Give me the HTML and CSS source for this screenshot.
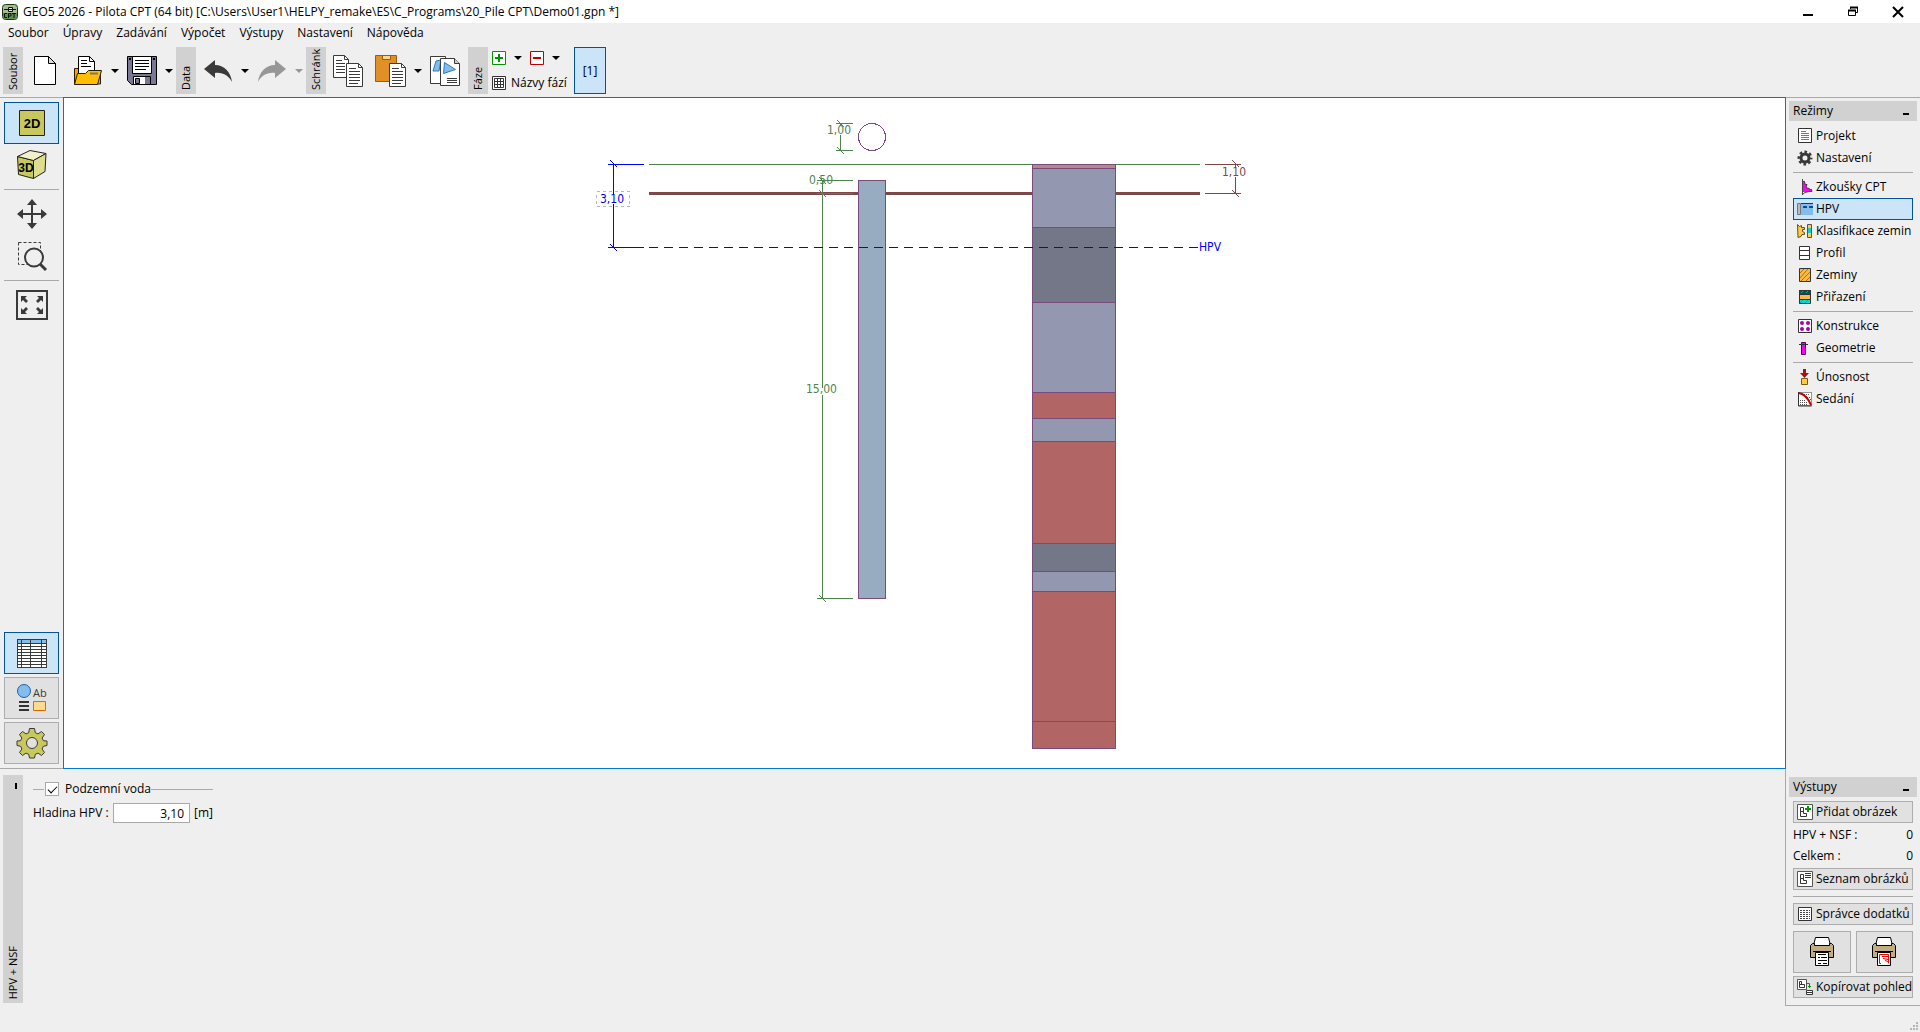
FILE: index.html
```html
<!DOCTYPE html>
<html lang="cs">
<head>
<meta charset="utf-8">
<title>GEO5 2026 - Pilota CPT</title>
<link rel="stylesheet" href="styles.css">
</head>
<body>
<header class="titlebar">
  <svg class="app-icon" width="16" height="16" viewBox="0 0 16 16"><rect x=".5" y=".5" width="15" height="15" rx="3" fill="#a3bd8c" stroke="#23331c"/><path d="M1 9h14v4a2 2 0 0 1-2 2H3a2 2 0 0 1-2-2z" fill="#5f8f4c"/><path d="M2 5.500h12M6.500 3.500h4v4h-4z" fill="#e4ecd6" stroke="#111"/><path d="M5 9.500H2.500v4H5M6.500 14V9.500h2.500v2.500H6.500M10 9.500h4M12 9.500V14" fill="none" stroke="#0a120a"/></svg>
  <h1 class="title">GEO5 2026 - Pilota CPT (64 bit) [C:\Users\User1\HELPY_remake\ES\C_Programs\20_Pile CPT\Demo01.gpn *]</h1>
  <div class="window-controls">
    <button aria-label="Minimalizovat"><svg width="12" height="12"><path d="M1 9h10" stroke="#000" stroke-width="2"/></svg></button>
    <button aria-label="Obnovit"><svg width="12" height="12" fill="none" stroke="#000"><path d="M3.500 3V1.500h7v5H9"/><path d="M3 1.500h8M1 4.500h8" stroke-width="2"/><path d="M1.500 4.500h7v5h-7z"/></svg></button>
    <button aria-label="Zavřít"><svg width="12" height="12"><path d="M1 1l10 10M11 1L1 11" stroke="#000" stroke-width="2"/></svg></button>
  </div>
</header>

<nav class="menubar">
  <button>Soubor</button><button>Úpravy</button><button>Zadávání</button><button>Výpočet</button><button>Výstupy</button><button>Nastavení</button><button>Nápověda</button>
</nav>

<div class="toolbar">
  <section class="group">
    <h2 class="vlabel">Soubor</h2>
    <div class="tools">
      <button class="tool" aria-label="Nový"><svg width="32" height="32"><path d="M5.500 1.500h14l7 7v21h-21z" fill="#fff" stroke="#000"/><path d="M19.500 1.500v7h7z" fill="#ddd" stroke="#000"/></svg></button>
      <button class="tool" aria-label="Otevřít"><svg width="32" height="32"><path d="M2.500 29V13.500h6l2 3h18V29z" fill="#f5a400" stroke="#2a2000"/><path d="M6.500 24V1.500h11l5 5V24z" fill="#fff" stroke="#000"/><path d="M17.500 1.500v5h5M9 8.500h6M9 5.500h6M9 11.500h10" fill="none" stroke="#000"/><path d="M2.500 29.500l3-11h8l3-3h13l-4 14z" fill="#ffbf00" stroke="#2a2000"/><path d="M18 18.500h8" stroke="#777" stroke-width="2"/></svg></button>
      <button class="drop" aria-label="Naposledy otevřené"><span class="arrow"></span></button>
      <button class="tool" aria-label="Uložit"><svg width="32" height="32"><path d="M1.500 1.500h29v28h-25l-4-4z" fill="#7b7896" stroke="#000"/><path d="M6.500 1.500h19v17h-19z" fill="#fff" stroke="#000"/><path d="M9 5.500h14M9 8.500h14M9 11.500h14M9 14.500h11" stroke="#000"/><path d="M7.500 21.500h17v8h-17z" fill="#fff" stroke="#000"/><path d="M19 22h5v7h-5z" fill="#7b7896"/><path d="M9.500 23.500h4v5h-4z" fill="#7b7896" stroke="#000"/><path d="M3 3h2v2H3zM27 3h2v2h-2z"/></svg></button>
      <button class="drop" aria-label="Uložit jako"><span class="arrow"></span></button>
    </div>
  </section>
  <section class="group">
    <h2 class="vlabel">Data</h2>
    <div class="tools">
      <button class="tool" aria-label="Zpět"><svg width="32" height="32"><path d="M2 14L13 5v5c9 0 16 7 17 17-3-6-9-10-17-9v5z" fill="#3a3a3a"/></svg></button>
      <button class="drop" aria-label="Historie zpět"><span class="arrow"></span></button>
      <button class="tool" aria-label="Znovu" disabled><svg width="32" height="32"><path d="M30 14L19 5v5C10 10 3 17 2 27c3-6 9-10 17-9v5z" fill="#979797"/></svg></button>
      <button class="drop" aria-label="Historie znovu" disabled><span class="arrow"></span></button>
    </div>
  </section>
  <section class="group">
    <h2 class="vlabel">Schránk</h2>
    <div class="tools">
      <button class="tool" aria-label="Kopírovat"><svg width="32" height="32" fill="#fff" stroke="#3a3a3a"><path d="M1.500.500h11l4 4v18h-15z"/><path d="M12.500.500v4h4M4 5.500h6M4 8.500h9M4 11.500h9M4 14.500h9M4 17.500h9" fill="none"/><path d="M14.500 8.500h12l4 4v19h-16z"/><path d="M26.500 8.500v4h4M17 13.500h7M17 16.500h11M17 19.500h11M17 22.500h11M17 25.500h11M17 28.500h9" fill="none"/></svg></button>
      <button class="tool" aria-label="Vložit"><svg width="32" height="32" fill="#fff" stroke="#3a3a3a"><path d="M.500.500h21v26H.500z" fill="#e28f26" stroke="#9b5c0b"/><path d="M7.500.500h8v4h-8z" fill="#f8d78c" stroke="#9b5c0b"/><path d="M14.500 8.500h12l4 4v19h-16z"/><path d="M26.500 8.500v4h4M17 13.500h7M17 16.500h11M17 19.500h11M17 22.500h11M17 25.500h11M17 28.500h9" fill="none"/></svg></button>
      <button class="drop" aria-label="Možnosti vložení"><span class="arrow"></span></button>
      <button class="tool" aria-label="Kopírovat obrázky"><svg width="32" height="32" fill="#fff" stroke="#3a3a3a"><path d="M1.500 1.500h15v27h-15z"/><path d="M4 16l3-10 5-1-2 11z" fill="#83bdeb" stroke="#2c7cbf"/><path d="M11.500 3.500h14l5 5v22h-19z"/><path d="M25.500 3.500v5h5" fill="#ccc"/><path d="M15.500 7.500l11 7-12 4z" fill="#83bdeb" stroke="#2c7cbf"/><path d="M18 23.500h10M18 25.500h10M18 27.500h10"/></svg></button>
    </div>
  </section>
  <section class="group">
    <h2 class="vlabel">Fáze</h2>
    <div class="phases">
      <div class="phase-row">
        <button class="mini" aria-label="Přidat fázi"><svg width="14" height="14"><path d="M.500.500h13v13H.500z" fill="#fff" stroke="#009600"/><path d="M7 3v8M3 7h8" stroke="#009600" stroke-width="2"/></svg></button>
        <button class="drop wide" aria-label="Možnosti přidání"><span class="arrow"></span></button>
        <button class="mini" aria-label="Odebrat fázi"><svg width="14" height="14"><path d="M.500.500h13v13H.500z" fill="#fff" stroke="#c00000"/><path d="M3 7h8" stroke="#c00000" stroke-width="2"/></svg></button>
        <button class="drop wide" aria-label="Možnosti odebrání"><span class="arrow"></span></button>
      </div>
      <button class="phase-names"><svg width="14" height="14" fill="#fff" stroke="#333"><path d="M.500.500h13v13H.500z"/><path d="M2.500 2.500h9v9h-9zM2.500 5.500h9M2.500 8.500h9M5.500 2.500v9M8.500 2.500v9"/></svg>Názvy fází</button>
    </div>
  </section>
  <button class="phase-tab">[1]</button>
</div>

<div class="workspace">
  <div class="left">
    <div class="upper">
      <aside class="sidebar">
        <button class="side on" aria-label="Pohled 2D"><svg width="32" height="32"><path d="M3.500 3.500h25v25h-25z" fill="#c9c85c" stroke="#222"/><text x="16" y="21" class="badge">2D</text></svg></button>
        <button class="side" aria-label="Pohled 3D"><svg width="32" height="32" stroke="#222"><path d="M1.500 7.500l16 4v18l-15-4z" fill="#c9c85c"/><path d="M1.500 7.500L14 1.500l16 3-12.500 7z" fill="#f1f0cb"/><path d="M17.500 11.500L30 4.500l-1 18-11.500 7z" fill="#dddc8f"/><text x="10" y="23" class="badge small">3D</text></svg></button>
        <hr>
        <button class="side" aria-label="Posun"><svg width="32" height="32"><path d="M16 5v22M5 16h22" stroke="#3a3a3a" stroke-width="2"/><path d="M16 1l5 6H11zM16 31l5-6H11zM1 16l6-5v10zM31 16l-6-5v10z" fill="#3a3a3a"/></svg></button>
        <button class="side" aria-label="Zvětšení výběru"><svg width="32" height="32" fill="none" stroke="#3a3a3a"><path d="M2.500 2.500h22v22h-22z" stroke-dasharray="3 2"/><circle cx="18" cy="17.500" r="9" fill="#efefef" stroke-width="2"/><path d="M24 24l6 6" stroke-width="3"/></svg></button>
        <hr>
        <button class="side" aria-label="Zobrazit vše"><svg width="32" height="32" fill="#3a3a3a"><path d="M1 2h30v28H1z" fill="none" stroke="#3a3a3a" stroke-width="2"/><path d="M5 7h6l-2 2 3 3-2 2-3-3-2 2zM27 7h-6l2 2-3 3 2 2 3-3 2 2zM5 25h6l-2-2 3-3-2-2-3 3-2-2zM27 25h-6l2-2-3-3 2-2 3 3 2-2z"/></svg></button>
        <div class="side-bottom">
          <button class="side on" aria-label="Tabulky"><svg width="32" height="32" shape-rendering="crispEdges"><path d="M1.500 2.500h29v28h-29z" fill="#fff"/><path d="M2 3h28v4H2z" fill="#83bdeb"/><path d="M1.500 2.500h29v28h-29zM1.500 6.500h29M1.500 9.500h29M1.500 12.500h29M1.500 15.500h29M1.500 18.500h29M1.500 21.500h29M1.500 24.500h29M1.500 27.500h29M5.500 2.500v28M14.500 2.500v28M25.500 2.500v28" fill="none" stroke="#3a3a3a"/></svg></button>
          <button class="side framed" aria-label="Nastavení kreslení"><svg width="32" height="32"><circle cx="8" cy="9" r="6.500" fill="#83bdeb" stroke="#1766ad"/><text x="17" y="15" class="ab">Ab</text><path d="M3 20h10M3 24h10M3 28h10" stroke="#333" stroke-width="2"/><path d="M17.500 19.500h12v9h-12z" fill="#fbdb92" stroke="#dd6b00"/></svg></button>
          <button class="side framed" aria-label="Nastavení"><svg width="32" height="32"><path d="M13.500 1.500h5l.8 4.200 2.700 1.200 3.500-2.400 3 3-2.400 3.500 1.200 2.700 3.700.3v4.500l-3.700.8-1.200 2.700 2.400 3.500-3 3-3.500-2.400-2.700 1.200-.8 3.700h-5l-.8-3.700-2.700-1.200-3.500 2.400-3-3 2.400-3.500-1.200-2.700-3.700-.8V14l3.700-.3 1.200-2.700-2.400-3.500 3-3L10 6.900l2.700-1.200z" fill="#c9c85c" stroke="#3a3a3a"/><circle cx="16" cy="16" r="5.500" fill="#e1e1e1" stroke="#3a3a3a"/></svg></button>
        </div>
      </aside>

      <main class="canvas">
        <svg class="drawing" viewBox="64 98 1721 670" shape-rendering="crispEdges">
          <path d="M649 164.500h551" class="terrain"/>
          <path d="M649 193.500h551" class="ground"/>
          <rect x="858.500" y="180.500" width="27" height="418" class="pile"/>
          <circle cx="872" cy="137" r="13.500" class="section"/>

          <g class="profile">
            <rect x="1032.500" y="164.500" width="83" height="4" fill="#b08c88"/>
            <rect x="1032.500" y="168.500" width="83" height="59" fill="#9397b0"/>
            <rect x="1032.500" y="227.500" width="83" height="75" fill="#737788"/>
            <rect x="1032.500" y="302.500" width="83" height="90" fill="#9397b0"/>
            <rect x="1032.500" y="392.500" width="83" height="26" fill="#b16564"/>
            <rect x="1032.500" y="418.500" width="83" height="23" fill="#9397b0"/>
            <rect x="1032.500" y="441.500" width="83" height="102" fill="#b16564"/>
            <rect x="1032.500" y="543.500" width="83" height="28" fill="#737788"/>
            <rect x="1032.500" y="571.500" width="83" height="20" fill="#9397b0"/>
            <rect x="1032.500" y="591.500" width="83" height="130" fill="#b16564"/>
            <rect x="1032.500" y="721.500" width="83" height="27" fill="#b16564"/>
          </g>

          <g class="dim green">
            <path d="M836 123.500h17M836 150.500h17M840.500 123v2M840.500 135v16M837 120l7 7M837 147l7 7"/>
            <path d="M817 180.500h36M817 193.500h36M822.500 180v208M822.500 395v204M817 598.500h36M819 177l7 7M819 190l7 7M819 595l7 7"/>
            <text x="827" y="134">1,00</text>
            <text x="809" y="184">0,50</text>
            <text x="806" y="393">15,00</text>
          </g>
          <g class="dim blue">
            <path d="M608 164.500h36M608 247.500h36M613.500 164v30M613.500 204v44M610 160l7 7M610 244l7 7"/>
            <path d="M649 247.500h550" stroke-dasharray="9 6"/>
            <text x="600" y="203">3,10</text>
            <text x="1199" y="251">HPV</text>
          </g>
          <rect x="596.500" y="191.500" width="33" height="15" class="editbox"/>
          <g class="dim brown">
            <path d="M1205 164.500h36M1205 193.500h36M1235.500 164v3M1235.500 177v17M1232 160l7 7M1232 190l7 7"/>
            <text x="1222" y="176">1,10</text>
          </g>
        </svg>
      </main>
    </div>

    <section class="lower">
      <div class="lower-tab"><button class="collapse" aria-label="Sbalit"></button><h2>HPV + NSF</h2></div>
      <form class="form">
        <div class="legend"><input type="checkbox" id="gw" checked><label for="gw">Podzemní voda</label></div>
        <div class="field"><label for="level">Hladina HPV :</label><input type="text" id="level" value="3,10"><span>[m]</span></div>
      </form>
    </section>
  </div>

  <aside class="right">
    <section class="panel">
      <header class="panel-head"><h2>Režimy</h2><button aria-label="Sbalit"></button></header>
      <nav class="panel-body">
        <button class="item"><svg width="16" height="16"><path d="M1.500.500h13v14h-13z" fill="#fff" stroke="#333"/><path d="M4 3.500h5M4 5.500h8M4 7.500h8M4 9.500h8M4 11.500h8" stroke="#777"/></svg>Projekt</button>
        <button class="item"><svg width="16" height="16"><circle cx="8" cy="8" r="4" fill="none" stroke="#3a3a3a" stroke-width="3"/><circle cx="8" cy="8" r="6" fill="none" stroke="#3a3a3a" stroke-width="3" stroke-dasharray="2.500 2.212" stroke-dashoffset="1.250"/></svg>Nastavení</button>
        <hr>
        <button class="item"><svg width="16" height="16"><path d="M5 2h3v3h2v2h-1v2h3v1h3v3H5z" fill="#f0f"/><path d="M5.500 0v16M5 1.500l3 2v2h2l-1 3 3 1 3 2v1h-3l-4 1-2 1.500" fill="none" stroke="#444"/></svg>Zkoušky CPT</button>
        <button class="item on"><svg width="16" height="16"><path d="M4 3h12v11H4z" fill="#83bdeb"/><path d="M4 2.500h12" stroke="#8a1010"/><path d="M6 6h4M12 6h4" stroke="#0a4a9a" stroke-width="2"/><path d="M.500 2.500h3v11h-3z" fill="#bbb" stroke="#777"/></svg>HPV</button>
        <button class="item"><svg width="16" height="16"><path d="M.500 1.500l2 2 2-1v2h3v2h-2v2l2 1v2H5l-1 2-3 1z" fill="#fc4" stroke="#665022"/><path d="M11 1h4v4h-4z" fill="#fc4"/><path d="M11 5h4v5h-4z" fill="#1cc"/><path d="M11 10h4v4h-4z" fill="#fc4"/><path d="M10.500 1.500h4v13h-4z" fill="none" stroke="#555"/></svg>Klasifikace zemin</button>
        <button class="item"><svg width="16" height="16"><path d="M2.500 1.500h10v13h-10zM2.500 5.500h10M2.500 10.500h10" fill="#fff" stroke="#333"/></svg>Profil</button>
        <button class="item"><svg width="16" height="16"><path d="M2.500 1.500h11v13h-11z" fill="#fdb83f"/><path d="M3 6l4-4M3 11l8-9M4 14l9-9M9 14l4-4" stroke="#a8701c"/><path d="M2.500 1.500h11v13h-11z" fill="none" stroke="#333"/></svg>Zeminy</button>
        <button class="item"><svg width="16" height="16"><path d="M2 1h12v4H2z" fill="#055"/><path d="M2 6h12v4H2z" fill="#fdb83f"/><path d="M2 11h12v4H2z" fill="#0dd"/><path d="M4 4l2-2M9 4l2-2M3 14l3-3M8 14l3-3" stroke="#0aa"/><path d="M2.500 1.500h11v13h-11zM2.500 5.500h11M2.500 10.500h11" fill="none" stroke="#333"/></svg>Přiřazení</button>
        <hr>
        <button class="item"><svg width="16" height="16"><path d="M1.500 1.500h13v13h-13z" fill="#fff" stroke="#333"/><g fill="#a0a"><circle cx="5" cy="5" r="2"/><circle cx="11" cy="5" r="2"/><circle cx="5" cy="11" r="2"/><circle cx="11" cy="11" r="2"/></g></svg>Konstrukce</button>
        <button class="item"><svg width="16" height="16"><path d="M4.500 2.500h4v12h-4z" fill="#f0f" stroke="#505"/><path d="M2 4.500h9" stroke="#333"/></svg>Geometrie</button>
        <hr>
        <button class="item"><svg width="16" height="16"><path d="M4.500 9.500h6v6h-6z" fill="#fc4" stroke="#7a5a10"/><path d="M6 0h3v4h3L7.500 9 3 4h3z" fill="#a11"/></svg>Únosnost</button>
        <button class="item"><svg width="16" height="16"><path d="M1.500 1.500h13v13h-13z" fill="#fff" stroke="#333" stroke-dasharray="1 1"/><path d="M3 13.500h8M3 11.500h7M3 9.500h5M7 3.500h6M10 6.500h3M11 8.500h3" stroke="#555" stroke-dasharray="1 1"/><path d="M1.500 1v14h13" fill="none" stroke="#333"/><path d="M2 2c6 1 9 5 12 12" fill="none" stroke="#c00" stroke-width="2"/></svg>Sedání</button>
      </nav>
    </section>

    <section class="panel outputs">
      <header class="panel-head"><h2>Výstupy</h2><button aria-label="Sbalit"></button></header>
      <div class="panel-body">
        <button class="item framed"><svg width="16" height="16"><path d="M.500.500h15v15H.500z" fill="#fff" stroke="#555"/><path d="M3.500 3.500h3v4h-3zM3.500 7.500h3v2h3v3h-6z" fill="none" stroke="#333"/><path d="M11 2v6M8 5h6" stroke="#009600" stroke-width="2"/></svg>Přidat obrázek</button>
        <dl class="counts"><div><dt>HPV + NSF :</dt><dd>0</dd></div><div><dt>Celkem :</dt><dd>0</dd></div></dl>
        <button class="item framed"><svg width="16" height="16"><path d="M.500.500h15v15H.500z" fill="#fff" stroke="#555"/><path d="M3.500 3.500h3v4h-3zM3.500 7.500h3v2h3v3h-6zM8 2.500h6M8 4.500h6M8 6.500h6" fill="none" stroke="#333"/></svg>Seznam obrázků</button>
        <hr class="roomy">
        <button class="item framed"><svg width="16" height="16"><path d="M1.500 1.500h13v13h-13z" fill="#fff" stroke="#333"/><path d="M3 4.500h10M3 6.500h10M3 8.500h10M3 10.500h10M3 12.500h10" stroke="#444" stroke-dasharray="2 1"/></svg>Správce dodatků</button>
        <div class="printers">
          <button class="framed" aria-label="Tisk dokumentu"><svg width="28" height="32"><path d="M5.500 9.500l2-8h13l2 8z" fill="#fff" stroke="#000"/><path d="M2.500 9.500l2-2h2v2h15v-2h2l2 2v12h-23z" fill="#c2ad83" stroke="#000"/><path d="M5 15.500h18" stroke="#000"/><path d="M7.500 16.500h13v13h-13z" fill="#fff" stroke="#000"/><path d="M10 18.500h8M10 21.500h2M13 21.500h6M10 24.500h9M10 27.500h3M15 27.500h4" stroke="#000"/></svg></button>
          <button class="framed" aria-label="Tisk obrázku"><svg width="28" height="32"><path d="M5.500 9.500l2-8h13l2 8z" fill="#fff" stroke="#000"/><path d="M2.500 9.500l2-2h2v2h15v-2h2l2 2v12h-23z" fill="#c2ad83" stroke="#000"/><path d="M5 15.500h18" stroke="#000"/><path d="M7.500 16.500h13v13h-13z" fill="#fff" stroke="#000"/><path d="M11 18.500H9.500v9H11M11 18.500h7.500v9M12 20.500h6M13 22.500l5 1M15 24.500l3 1" fill="none" stroke="#f00"/></svg></button>
        </div>
        <button class="item framed"><svg width="16" height="16"><path d="M.500.500h9v10h-9z" fill="#fff" stroke="#555"/><path d="M2.500 2.500h2v3h-2zM2.500 5.500h5v3h-5z" fill="none" stroke="#333"/><path d="M10 4.500h2.500V9M11 7.500h3" fill="none" stroke="#009600"/><path d="M9.500 11.500h6v4h-6zM9 13.500h7" fill="#fff" stroke="#333"/></svg>Kopírovat pohled</button>
      </div>
    </section>
  </aside>
</div>

<footer class="statusbar"><svg width="9" height="9" fill="#b5b5b5"><path d="M6 0h2v2H6zM3 3h2v2H3zM6 3h2v2H6zM0 6h2v2H0zM3 6h2v2H3zM6 6h2v2H6z"/></svg></footer>
</body>
</html>
```
FILE: styles.css
```css
* { box-sizing: border-box; }

body {
  margin: 0;
  min-height: 100vh;
  display: flex;
  flex-direction: column;
  background: #efefef;
  color: #000;
  font: 12px/16px "Open Sans", "Noto Sans", sans-serif;
}

h1, h2, dl, dd { margin: 0; font-size: inherit; font-weight: normal; }
svg { display: block; flex: none; }

button {
  padding: 0;
  border: 0;
  background: none;
  font: inherit;
  color: inherit;
  white-space: nowrap;
}

hr { width: 100%; height: 1px; margin: 3px 0; border: 0; background: #a9a9a9; flex: none; }

/* title bar and menu */
.titlebar { display: flex; align-items: center; height: 23px; padding-left: 2px; background: #fff; }
.title { flex: 1; margin-left: 5px; white-space: nowrap; overflow: hidden; }
.window-controls { display: flex; }
.window-controls button { width: 45px; height: 23px; display: grid; place-items: center; }
.menubar { display: flex; gap: 14px; height: 24px; padding: 0 8px 4px; }

/* toolbar */
.toolbar { display: flex; height: 50px; padding: 0 3px 3px; }
.group { display: flex; }
.vlabel {
  width: 20px;
  padding-top: 4px;
  background: #d1d1d1;
  writing-mode: vertical-rl;
  transform: rotate(180deg);
  font-size: 11px;
  line-height: 20px;
  white-space: nowrap;
}
.tools { display: flex; padding-right: 2px; }
.tool { width: 43px; display: grid; place-items: center; }
.drop { width: 11px; display: grid; place-items: center; }
.drop.wide { width: 24px; }
.arrow { border: 4px solid transparent; border-top-color: #000; border-bottom: 0; }
.drop:disabled .arrow { border-top-color: #979797; }
.phases { display: flex; flex-direction: column; justify-content: space-between; width: 86px; padding: 4px 0 3px 4px; }
.phase-row { display: flex; }
.phase-names { display: flex; align-items: center; gap: 5px; }
.phase-tab { width: 32px; border: 1px solid #005499; background: #cce4f7; }

/* main area */
.workspace { flex: 1; display: flex; }
.left { flex: 1; display: flex; flex-direction: column; min-width: 0; }
.upper { flex: 1; display: flex; min-height: 0; }
.sidebar {
  width: 63px;
  display: flex;
  flex-direction: column;
  padding: 4px;
  border: solid #a9a9a9;
  border-width: 1px 0;
}
.side { width: 55px; height: 42px; display: grid; place-items: center; flex: none; }
.side-bottom { display: flex; flex-direction: column; gap: 3px; margin-top: auto; }
.on { border: 1px solid #005499; background: #cce4f7; }
.framed { border: 1px solid #adadad; background: #e1e1e1; }
.badge { font: bold 13px "Liberation Sans", sans-serif; text-anchor: middle; fill: #000; stroke: none; }
.small { font-size: 12px; }
.ab { font-size: 11px; fill: #3a3a3a; }

.canvas { flex: 1; min-width: 0; border: 1px solid #0078d7; background: #fff; position: relative; }
.drawing { position: absolute; inset: 0; width: 100%; height: 100%; }
.terrain { stroke: #4f844f; }
.ground { stroke: #7c4848; stroke-width: 3; }
.pile { fill: #97acc1; stroke: #7a4a7c; }
.section { fill: none; stroke: #7a4a7c; }
.profile { stroke: #7a4a7c; }
.dim { fill: none; font: 12px "DejaVu Sans Condensed", "DejaVu Sans", sans-serif; }
.green { stroke: #4f844f; }
.green text { fill: #4f844f; }
.blue { stroke: #00f; }
.blue text { fill: #00f; }
.brown { stroke: #7c4848; }
.brown text { fill: #7c4848; }
.dim text { stroke: none; }
.editbox { fill: none; stroke: #b8b8b8; stroke-dasharray: 3 3; }

/* input frame */
.lower { display: flex; height: 237px; padding: 6px 0 3px 3px; border-right: 1px solid #a9a9a9; }
.lower-tab {
  width: 20px;
  display: flex;
  flex-direction: column;
  align-items: center;
  justify-content: space-between;
  padding: 8px 0 4px;
  background: #d1d1d1;
}
.lower-tab h2 { writing-mode: vertical-rl; transform: rotate(180deg); font-size: 11px; line-height: 20px; }
.collapse { width: 2px; height: 6px; margin-left: 6px; background: #000; }
.form { display: flex; flex-direction: column; gap: 6px; width: 190px; padding: 6px 0 0 10px; }
.legend { display: flex; align-items: center; }
.legend::before { content: ""; width: 11px; height: 1px; margin-right: 1px; background: #a9a9a9; }
.legend::after { content: ""; flex: 1; height: 1px; background: #a9a9a9; }
.legend input {
  appearance: none;
  width: 14px;
  height: 14px;
  margin: 0 6px 0 0;
  border: 1px solid #a9a9a9;
  background: #fff;
  display: grid;
  place-items: center;
}
.legend input:checked::before {
  content: "";
  width: 8px;
  height: 4px;
  border: solid #000;
  border-width: 0 0 1px 1px;
  transform: translateY(-1px) rotate(-45deg);
}
.field { display: flex; align-items: center; gap: 4px; white-space: nowrap; }
.field input {
  flex: 1;
  min-width: 0;
  height: 20px;
  padding: 0 5px;
  border: 1px solid #a9a9a9;
  background: #fff;
  font: inherit;
  text-align: right;
}

/* right column */
.right {
  width: 134px;
  display: flex;
  flex-direction: column;
  justify-content: space-between;
  padding: 3px 3px 7px;
  border: solid #a9a9a9;
  border-width: 1px 0;
}
.panel-head { display: flex; align-items: center; justify-content: space-between; height: 20px; padding: 0 8px 0 4px; background: #d1d1d1; }
.panel-head button { width: 6px; height: 2px; margin-top: 6px; background: #000; }
.panel-body { display: flex; flex-direction: column; padding: 4px 4px 0; }
.item { display: flex; align-items: center; gap: 3px; width: 100%; height: 22px; padding-left: 3px; border: 1px solid transparent; }
.item.on { border-color: #005499; }
.item.framed { border-color: #adadad; }
.counts div { display: flex; justify-content: space-between; height: 21px; align-items: center; }
.counts { padding: 1px 0 2px; }
.roomy { margin: 6px 0; }
.printers { display: flex; gap: 5px; margin: 6px 0 3px; }
.printers button { flex: 1; height: 42px; display: grid; place-items: center; }

.statusbar { height: 26px; display: flex; justify-content: flex-end; align-items: flex-end; padding: 0 1px 1px; }
```
